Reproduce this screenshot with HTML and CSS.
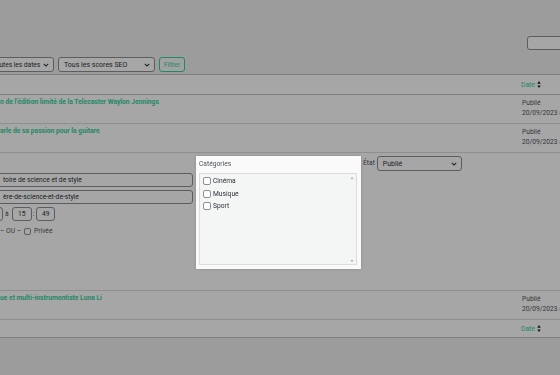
FILE: index.html
```html
<!DOCTYPE html>
<html lang="fr">
<head>
  <meta charset="UTF-8" />
  <title>Articles</title>
  <link rel="stylesheet" href="styles.css">
</head>
<body>
  <div class="top">
    <div class="search-row">
      <div class="search"></div>
    </div>
    <div class="filters">
      <div class="select select-date">
        <span>Toutes les dates</span>
        <svg class="chev" viewBox="0 0 8 5"><path d="M1 1l3 3 3-3" /></svg>
      </div>
      <div class="select select-seo">
        <span>Tous les scores SEO</span>
        <svg class="chev" viewBox="0 0 8 5"><path d="M1 1l3 3 3-3" /></svg>
      </div>
      <div class="btn-filter">Filtrer</div>
    </div>
  </div>

  <div class="list">
    <div class="row head">
      <div class="col-title"></div>
      <div class="col-date">
        <span class="sort-link">Date</span>
        <svg class="sort" viewBox="0 0 4 8"><path d="M2 0l2 3H0z M2 8l2-3H0z" /></svg>
      </div>
    </div>

    <div class="row">
      <div class="col-title"><a class="title">n de l’édition limité de la Telecaster Waylon Jennings</a></div>
      <div class="col-date">Publié<br>20/09/2023 à</div>
    </div>

    <div class="row">
      <div class="col-title"><a class="title">arle de sa passion pour la guitare</a></div>
      <div class="col-date">Publié<br>20/09/2023 à</div>
    </div>

    <div class="row quick">
      <div class="qe-left">
        <div class="field">toire de science et de style</div>
        <div class="field">ère-de-science-et-de-style</div>
        <div class="time">
          <div class="tbox tbox-cut"></div>
          <span class="at">à</span>
          <div class="tbox">15</div>
          <span class="colon">:</span>
          <div class="tbox">49</div>
        </div>
        <div class="private">
          <span>– OU –</span>
          <span class="check"></span>
          <span>Privée</span>
        </div>
      </div>

      <div class="cats">
        <div class="cats-label">Catégories</div>
        <div class="cats-box">
          <ul class="cats-list">
            <li><span class="check"></span>Cinéma</li>
            <li><span class="check"></span>Musique</li>
            <li><span class="check"></span>Sport</li>
          </ul>
          <div class="scroll">
            <span>▴</span>
            <span>▾</span>
          </div>
        </div>
      </div>

      <div class="qe-right">
        <span class="state-label">État</span>
        <div class="select select-state">
          <span>Publié</span>
          <svg class="chev" viewBox="0 0 8 5"><path d="M1 1l3 3 3-3" /></svg>
        </div>
      </div>
    </div>

    <div class="row">
      <div class="col-title"><a class="title">ue et multi-instrumentiste Luna Li</a></div>
      <div class="col-date">Publié<br>20/09/2023 à</div>
    </div>

    <div class="row head foot">
      <div class="col-title"></div>
      <div class="col-date">
        <span class="sort-link">Date</span>
        <svg class="sort" viewBox="0 0 4 8"><path d="M2 0l2 3H0z M2 8l2-3H0z" /></svg>
      </div>
    </div>
  </div>

  <div class="overlay"></div>
</body>
</html>
```

FILE: styles.css
```css
body {
  margin: 0;
  width: 560px;
  height: 375px;
  overflow: hidden;
  font-family: Roboto, "Liberation Sans", sans-serif;
  font-size: 6.7px;
  color: #50575e;
  background-color: #f0f0f1;
}
.overlay {
  position: fixed;
  top: 0;
  left: 0;
  right: 0;
  bottom: 0;
  background: rgba(0, 0, 0, 0.35);
  z-index: 5;
}

/* top bar */
.top {
  height: 74px;
}
.search-row {
  display: flex;
  justify-content: flex-end;
  padding-top: 36px;
}
.search {
  width: 40px;
  height: 14px;
  margin-right: -7px;
  box-sizing: border-box;
  border: 1px solid #8c8f94;
  border-radius: 3px;
  background-color: #fff;
}
.filters {
  display: flex;
  gap: 4px;
  margin-top: 7px;
}
.select {
  flex-shrink: 0;
  height: 15px;
  box-sizing: border-box;
  display: flex;
  align-items: center;
  justify-content: space-between;
  padding: 0 4px 0 5px;
  border: 1px solid #8c8f94;
  border-radius: 3px;
  background-color: #fff;
  font-size: 7px;
  color: #2c3338;
  white-space: nowrap;
}
.chev {
  width: 6px;
  height: 4px;
  fill: none;
  stroke: #2c3338;
  stroke-width: 1.4;
}
.select-date {
  width: 68px;
  margin-left: -14px;
  font-size: 6.6px;
}
.select-seo {
  width: 97px;
}
.btn-filter {
  width: 26px;
  height: 15px;
  box-sizing: border-box;
  border: 1px solid #34d39d;
  border-radius: 3px;
  background-color: #f6f7f7;
  color: #34d39d;
  font-size: 6.3px;
  display: flex;
  align-items: center;
  justify-content: center;
}

/* list table */
.list {
  border-top: 1px solid #c3c4c7;
  border-bottom: 1px solid #c3c4c7;
  background-color: #fff;
}
.row {
  display: flex;
  height: 29px;
  padding-top: 3px;
  box-sizing: border-box;
  border-bottom: 1px solid #dcdcde;
}
.row.head {
  height: 20px;
  padding-top: 0;
  align-items: center;
  border-bottom-color: #c3c4c7;
}
.row.foot {
  height: 17px;
  border-bottom: none;
}
.col-title {
  flex: 1;
  line-height: 9px;
  white-space: nowrap;
}
.col-date {
  width: 42px;
  box-sizing: border-box;
  padding-left: 4px;
  line-height: 10px;
  white-space: nowrap;
  overflow: hidden;
}
.head .col-date {
  display: flex;
  align-items: center;
  gap: 2px;
  padding-left: 3px;
}
.title {
  color: #34d39d;
  font-weight: bold;
}
.sort-link {
  color: #34d39d;
}
.sort {
  width: 4px;
  height: 7px;
  fill: #1d2327;
}

/* quick edit */
.row.quick {
  height: 138px;
  padding-top: 3px;
}
.qe-left {
  width: 193px;
  padding-top: 17px;
}
.field {
  height: 14px;
  margin-left: -6px;
  margin-bottom: 3px;
  padding-left: 8px;
  box-sizing: border-box;
  border: 1px solid #8c8f94;
  border-radius: 3px;
  background-color: #fff;
  line-height: 12px;
  color: #2c3338;
  white-space: nowrap;
}
.time {
  display: flex;
  align-items: center;
  height: 14px;
  margin-top: 1px;
}
.tbox {
  height: 14px;
  width: 20px;
  box-sizing: border-box;
  border: 1px solid #8c8f94;
  border-radius: 3px;
  background-color: #fff;
  text-align: center;
  line-height: 12px;
  color: #2c3338;
}
.tbox-cut {
  width: 13px;
  margin-left: -10px;
}
.at {
  margin: 0 3px 0 2px;
}
.colon {
  margin: 0 2px 0 1px;
}
.tbox:last-child {
  width: 19px;
}
.private {
  display: flex;
  align-items: center;
  gap: 3px;
  margin-top: 5px;
  height: 10px;
}
.check {
  display: inline-block;
  width: 7px;
  height: 7px;
  box-sizing: border-box;
  border: 1px solid #8c8f94;
  border-radius: 2px;
  background-color: #fff;
}

/* categories popover, sits above the overlay */
.cats {
  position: relative;
  z-index: 10;
  width: 165px;
  height: 113px;
  margin-left: 3px;
  padding: 3px 4px 4px 3px;
  box-sizing: border-box;
  background-color: #fafafa;
  box-shadow: 0 0 3px rgba(0, 0, 0, 0.15);
}
.cats-label {
  line-height: 10px;
  margin-bottom: 4px;
  color: #50575e;
}
.cats-box {
  display: flex;
  height: 92px;
  box-sizing: border-box;
  border: 1px solid #dcdcde;
  background-color: #f4f5f5;
}
.cats-list {
  flex: 1;
  list-style: none;
  margin: 0;
  padding: 3px;
}
.cats-list li {
  display: flex;
  align-items: center;
  height: 8px;
  margin-bottom: 4.5px;
  color: #2c3338;
}
.cats-list .check {
  width: 8px;
  height: 8px;
  margin-right: 2px;
}
.scroll {
  width: 8px;
  display: flex;
  flex-direction: column;
  justify-content: space-between;
  align-items: center;
  padding: 1px 0;
  font-size: 4px;
  color: #8c8f94;
}
.qe-right {
  display: flex;
  align-items: flex-start;
  gap: 2px;
  margin-left: 2px;
}
.state-label {
  line-height: 14px;
}
.select-state {
  width: 85px;
}
```
